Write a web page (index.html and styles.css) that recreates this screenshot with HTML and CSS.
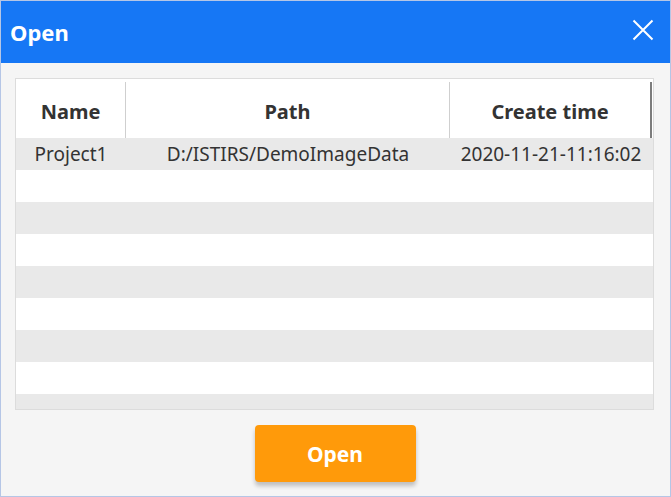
FILE: index.html
```html
<!DOCTYPE html>
<html>
<head>
<meta charset="utf-8">
<link rel="stylesheet" href="styles.css">
</head>
<body>
<div class="dialog">
  <div class="titlebar">
    <span class="title">Open</span>
    <svg class="close" width="22" height="22" viewBox="0 0 22 22"><path d="M1.5 1.5 L20.5 20.5 M20.5 1.5 L1.5 20.5" stroke="#fff" stroke-width="2" fill="none"/></svg>
  </div>
  <div class="content">
    <div class="table">
      <div class="row head">
        <div class="cell c1">Name</div>
        <div class="cell c2">Path</div>
        <div class="cell c3">Create time</div>
      </div>
      <div class="row odd">
        <div class="cell c1">Project1</div>
        <div class="cell c2">D:/ISTIRS/DemoImageData</div>
        <div class="cell c3">2020-11-21-11:16:02</div>
      </div>
      <div class="row"></div>
      <div class="row odd"></div>
      <div class="row"></div>
      <div class="row odd"></div>
      <div class="row"></div>
      <div class="row odd"></div>
      <div class="row"></div>
      <div class="row odd"></div>
    </div>
    <div class="actions">
      <button class="btn">Open</button>
    </div>
  </div>
</div>
</body>
</html>
```
FILE: styles.css
```css
html, body {
  margin: 0;
  padding: 0;
  background: #f5f5f5;
}
body {
  font-family: "Noto Sans", "Open Sans", sans-serif;
  color: #333;
}
.dialog {
  width: 671px;
  height: 497px;
  box-sizing: border-box;
  border: 1px solid #b5c6e6;
  background: #f5f5f5;
  display: flex;
  flex-direction: column;
}
.titlebar {
  height: 62px;
  background: #1677f5;
  display: flex;
  align-items: center;
  justify-content: space-between;
  padding: 0 16px 0 9px;
  flex-shrink: 0;
}
.title {
  color: #fff;
  font-weight: bold;
  font-size: 22px;
  margin-top: -1px;
}
.close {
  display: block;
  margin-top: -4px;
}
.content {
  flex: 1;
  padding: 15px 16px 0 14px;
  display: flex;
  flex-direction: column;
}
.table {
  height: 332px;
  box-sizing: border-box;
  border: 1px solid #dcdcdc;
  background: #fff;
  overflow: hidden;
}
.row {
  display: flex;
  height: 32px;
  flex-shrink: 0;
}
.row.odd {
  background: #e9e9e9;
}
.row.head {
  height: 59px;
  background: #fff;
  padding-top: 3px;
  box-sizing: border-box;
}
.cell {
  display: flex;
  align-items: center;
  justify-content: center;
  font-size: 19px;
  white-space: nowrap;
  box-sizing: border-box;
}
.head .cell {
  font-weight: bold;
  font-size: 20px;
  padding-top: 2px;
}
.c1 { width: 110px; }
.c2 { width: 324px; }
.c3 { width: 202px; }
.head .c1, .head .c2 {
  border-right: 1px solid #cfcfcf;
}
.head .c3 {
  border-right: 2px solid #7d7d7d;
}
.actions {
  display: flex;
  justify-content: center;
  padding-top: 15px;
}
.btn {
  width: 161px;
  height: 57px;
  border: none;
  border-radius: 4px;
  background: #ff9a0a;
  color: #fff;
  font-family: "Noto Sans", "Open Sans", sans-serif;
  font-weight: bold;
  font-size: 21px;
  box-shadow: 0 4px 4px rgba(0,0,0,0.22);
  margin-left: 1px;
}
```
